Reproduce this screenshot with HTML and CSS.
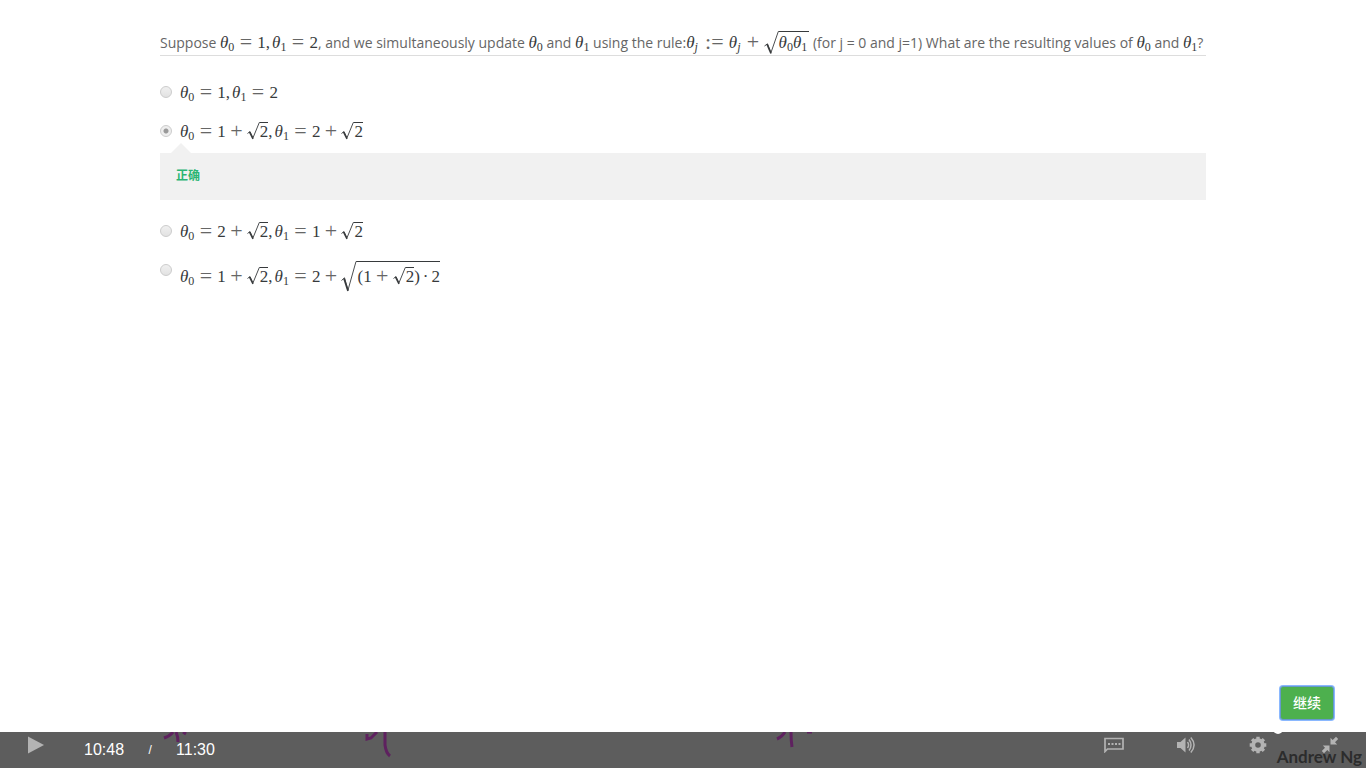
FILE: index.html
```html
<!DOCTYPE html>
<html lang="en">
<head>
<meta charset="utf-8">
<title>Video quiz</title>
<link rel="stylesheet" href="styles.css">
</head>
<body>
<svg class="defs" width="0" height="0" aria-hidden="true">
  <symbol id="surd" viewBox="0 0 13 18"><path d="M0.5 11.5L3 9.5L6 15.8L12.3 0.5H13" fill="none" stroke="#373a3c" stroke-width="0.9"/><path d="M2.5 10L6 17" stroke="#373a3c" stroke-width="1.5"/></symbol>
  <symbol id="surd-mid" viewBox="0 0 15 24"><path d="M0.5 15L3.5 12.8L7 21.5L14.3 0.5H15" fill="none" stroke="#373a3c" stroke-width="0.9"/><path d="M3 13.3L7 22.5" stroke="#373a3c" stroke-width="1.6"/></symbol>
  <symbol id="surd-big" viewBox="0 0 16 31"><path d="M0.5 19.5L3.5 16.8L7 29L15 0.5H16" fill="none" stroke="#373a3c" stroke-width="0.9"/><path d="M3 17.5L7 30" stroke="#373a3c" stroke-width="1.7"/></symbol>
</svg>
<main class="quiz">
  <fieldset class="question">
    <legend class="prompt">Suppose <span class="math"><i>θ</i><sub>0</sub><b class="rel">=</b>1<b class="comma">,</b><i>θ</i><sub>1</sub><b class="rel">=</b>2</span>, and we simultaneously update <span class="math"><i>θ</i><sub>0</sub></span> and <span class="math"><i>θ</i><sub>1</sub></span> using the rule:<span class="math"><i>θ</i><sub class="index"><i>j</i></sub><b class="rel assign">:=</b><i>θ</i><sub class="index"><i>j</i></sub><b class="bin">+</b><span class="root mid"><svg><use href="#surd-mid"/></svg><span class="radicand"><i>θ</i><sub>0</sub><i>θ</i><sub>1</sub></span></span></span> (for j = 0 and j=1) What are the resulting values of <span class="math"><i>θ</i><sub>0</sub></span> and <span class="math"><i>θ</i><sub>1</sub></span>?</legend>
    <label class="option"><input type="radio" name="answer"><span class="math"><i>θ</i><sub>0</sub><b class="rel">=</b>1<b class="comma">,</b><i>θ</i><sub>1</sub><b class="rel">=</b>2</span></label>
    <label class="option"><input type="radio" name="answer" checked><span class="math"><i>θ</i><sub>0</sub><b class="rel">=</b>1<b class="bin">+</b><span class="root"><svg><use href="#surd"/></svg><span class="radicand">2</span></span><b class="comma">,</b><i>θ</i><sub>1</sub><b class="rel">=</b>2<b class="bin">+</b><span class="root"><svg><use href="#surd"/></svg><span class="radicand">2</span></span></span></label>
    <div class="feedback" lang="zh">正确</div>
    <label class="option"><input type="radio" name="answer"><span class="math"><i>θ</i><sub>0</sub><b class="rel">=</b>2<b class="bin">+</b><span class="root"><svg><use href="#surd"/></svg><span class="radicand">2</span></span><b class="comma">,</b><i>θ</i><sub>1</sub><b class="rel">=</b>1<b class="bin">+</b><span class="root"><svg><use href="#surd"/></svg><span class="radicand">2</span></span></span></label>
    <label class="option tall"><input type="radio" name="answer"><span class="math"><i>θ</i><sub>0</sub><b class="rel">=</b>1<b class="bin">+</b><span class="root"><svg><use href="#surd"/></svg><span class="radicand">2</span></span><b class="comma">,</b><i>θ</i><sub>1</sub><b class="rel">=</b>2<b class="bin">+</b><span class="root big"><svg><use href="#surd-big"/></svg><span class="radicand">(1<b class="bin">+</b><span class="root"><svg><use href="#surd"/></svg><span class="radicand">2</span></span>)<b class="dot">·</b>2</span></span></span></label>
  </fieldset>
</main>
<div class="actions"><button class="continue" lang="zh">继续</button></div>
<footer class="player">
  <svg class="ink ink-a" width="30" height="12" viewBox="0 0 30 12"><path d="M2 6Q8 4 11 0M14 0Q16 4 16 10M21 0L24 2" /></svg>
  <svg class="ink ink-b" width="30" height="28" viewBox="0 0 30 28"><path d="M4 2V7L8 6L14 0M22 0V13Q23 21 27 24"/></svg>
  <svg class="ink ink-c" width="44" height="18" viewBox="0 0 44 18"><path d="M3 7Q8 5 11 0M17 0Q17 8 18 15M33 0H38"/></svg>
  <span class="credit">Andrew Ng</span>
  <span class="knob"></span>
  <button class="icon play" aria-label="Play"><svg width="16" height="18" viewBox="0 0 16 18"><path d="M0 0.5L16 9L0 17.5Z"/></svg></button>
  <div class="time"><span>10:48</span><span class="slash">/</span><span>11:30</span></div>
  <div class="controls">
    <button class="icon" aria-label="Subtitles"><svg width="20" height="16" viewBox="0 0 20 16"><path d="M1 1.5H19V12H3.5L1 14.5Z" fill="none" stroke="#b3b3b3" stroke-width="1.7"/><path d="M4 6h2v2H4zM7.5 6h2v2h-2zM11 6h2v2h-2zM14.5 6h2v2h-2z"/></svg></button>
    <button class="icon" aria-label="Volume"><svg width="20" height="18" viewBox="0 0 20 18"><path d="M1 6H4.5L9.5 1.5V16.5L4.5 12H1Z"/><path d="M11.5 6Q13.7 9 11.5 12M13 3.5Q17 9 13 14.5M14.8 1.5Q21.3 9 14.8 16.5" fill="none" stroke="#b3b3b3" stroke-width="1.5"/></svg></button>
    <button class="icon" aria-label="Settings"><svg width="18" height="18" viewBox="0 0 18 18"><circle cx="9" cy="9" r="4.8" fill="none" stroke="#b3b3b3" stroke-width="4"/><path d="M9 .7V4M9 14V17.3M.7 9H4M14 9H17.3M3.1 3.1L5.4 5.4M12.6 12.6L14.9 14.9M14.9 3.1L12.6 5.4M5.4 12.6L3.1 14.9" stroke="#b3b3b3" stroke-width="3.4"/></svg></button>
    <button class="icon" aria-label="Exit full screen"><svg width="18" height="18" viewBox="0 0 18 18"><path d="M9.5 1.8V8.5H16.2L14 6.3L17.2 3L15 .8L11.7 4ZM8.5 16.2V9.5H1.8L4 11.7L.8 15L3 17.2L6.3 14Z"/></svg></button>
  </div>
</footer>
</body>
</html>
```
FILE: styles.css
```css
* { box-sizing: border-box; }
body {
  margin: 0;
  min-height: 100vh;
  display: flex;
  flex-direction: column;
  background: #fff;
  color: #666;
  font: 14px/24px "Open Sans", "Noto Sans CJK SC", sans-serif;
}
.defs { position: absolute; }
.quiz { flex: 1; padding: 31px 160px 0; }
.question { margin: 0; padding: 0; border: 0; min-width: 0; }
.prompt {
  width: 100%;
  padding: 0;
  margin-bottom: 17px;
  border-bottom: 1px solid #ddd;
}
.math {
  color: #373a3c;
  font: 17px/24px "Liberation Serif", serif;
  white-space: nowrap;
}
.math b { font-weight: 400; }
.math sub { font-size: 12px; line-height: 0; vertical-align: -3px; }
.math .index { margin-right: 2px; }
.math .rel, .math .bin {
  display: inline-block;
  width: 13px;
  margin: 0 5px;
  color: #666;
  font-size: 22px;
  line-height: 0;
  text-align: center;
  vertical-align: -1px;
}
.math .bin { margin: 0 4px; }
.math .assign { width: 19px; }
.comma { margin-right: 2px; }
.dot { margin: 0 3px; }
.root { line-height: 17px; }
.root > svg { width: 13px; height: 18px; vertical-align: -3px; }
.radicand { display: inline-block; border-top: 1px solid #373a3c; }
.mid { line-height: 21px; }
.mid > svg { width: 15px; height: 24px; vertical-align: -7px; }
.mid > .radicand { padding-right: 2px; }
.big { line-height: 29px; }
.big > svg { width: 16px; height: 31px; vertical-align: -10px; }
.option { display: flex; align-items: center; gap: 8px; height: 39px; }
.option input {
  appearance: none;
  width: 12px;
  height: 12px;
  margin: 0 0 2px;
  border: 1px solid #ccc;
  border-radius: 50%;
  background: linear-gradient(#f0f0f0, #e2e2e2);
}
.option input:checked { background: radial-gradient(circle, #999 0 2px, #eee 3px); }
.tall { height: 51px; align-items: flex-start; padding-top: 10px; }
.tall input { margin-top: 3px; }
.feedback {
  position: relative;
  margin: 2px 0 12px;
  padding: 10px 16px 13px;
  background: #f1f1f1;
  color: #2ab573;
  font: 700 12px/24px "Noto Sans CJK SC", sans-serif;
}
.feedback::before {
  content: "";
  position: absolute;
  left: 11px;
  top: -10px;
  border: 10px solid transparent;
  border-top: 0;
  border-bottom-color: #f1f1f1;
}
.actions { display: flex; justify-content: flex-end; padding: 0 32px 12px; }
.continue {
  padding: 4px 12px 6px;
  border: 1px solid #69c;
  border-radius: 3px;
  box-shadow: 0 0 0 1px #8ab8ff;
  background: #4db04e;
  color: #fff;
  font: 500 14px/22px "Noto Sans CJK SC", sans-serif;
}
.player {
  position: relative;
  display: flex;
  align-items: center;
  height: 36px;
  padding: 0 26px 0 28px;
  background: #5d5d5d;
}
.icon {
  display: grid;
  place-items: center;
  width: 20px;
  height: 20px;
  padding: 0;
  border: 0;
  background: none;
  margin-bottom: 10px;
}
.icon svg { fill: #b3b3b3; }
.play { width: 16px; }
.time {
  display: flex;
  align-items: center;
  margin-left: 40px;
  color: #fff;
  font: 16px/34px "Liberation Sans", sans-serif;
  position: relative;
}
.slash { width: 52px; text-align: center; font-size: 12px; }
.controls { position: relative; display: flex; gap: 52px; margin-left: auto; }
.ink { position: absolute; top: 0; fill: none; stroke: #5e215f; stroke-width: 3; }
.ink-a { left: 162px; }
.ink-b { left: 363px; }
.ink-c { left: 774px; }
.credit {
  position: absolute;
  right: 4px;
  bottom: -1px;
  color: #2c2c2c;
  font: 700 17px/24px Lato, sans-serif;
}
.knob {
  position: absolute;
  right: 83px;
  top: -8px;
  width: 10px;
  height: 10px;
  border-radius: 50%;
  background: #fff;
}
```
